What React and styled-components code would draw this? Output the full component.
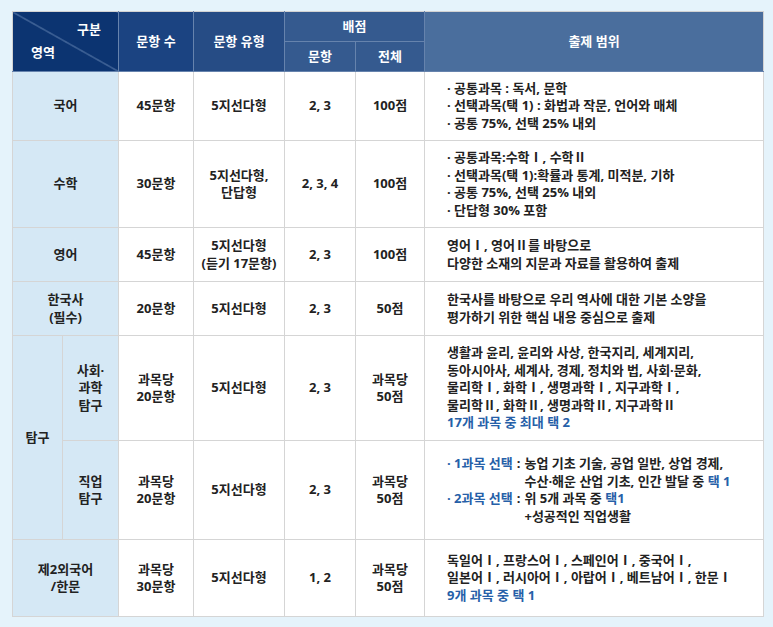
import React from "react";
import styled, { createGlobalStyle } from "styled-components";

const GlobalStyle = createGlobalStyle`
  html, body {
    margin: 0;
    padding: 0;
    background: #e5f3fb;
  }
  body {
    font-family: "Open Sans", "Noto Sans CJK KR", sans-serif;
    color: #222;
  }
`;

const Page = styled.div`
  padding: 11px 0 0 12px;
  width: 773px;
  height: 627px;
  box-sizing: border-box;
`;

const Table = styled.table`
  border-collapse: collapse;
  table-layout: fixed;
  width: 751px;
  font-size: 13px;
  font-weight: 700;
  letter-spacing: 0;
  line-height: 17.5px;
  border: 1px solid #d2d2d2;
`;

const HeadRow = styled.tr`
  height: 30px;
`;

const HeadCell = styled.th`
  background: ${({ $bg }) => $bg};
  color: #fff;
  font-weight: 700;
  font-size: 13px;
  border: 1px solid #6683ad;
  border-top: none;
  padding: 0;
  text-align: center;
  vertical-align: middle;
`;

const CornerCell = styled.th`
  position: relative;
  padding: 0;
  color: #fff;
  font-weight: 700;
  font-size: 13px;
  border: 1px solid #6683ad;
  border-top: none;
  border-left: none;
  background:
    linear-gradient(
      to top right,
      transparent calc(50% - 0.7px),
      #7b98c2 50%,
      transparent calc(50% + 0.7px)
    ),
    #0c3471;
`;

const CornerLabel = styled.span`
  position: absolute;
  ${({ $top }) => ($top ? "top: 9px; right: 17px;" : "bottom: 10px; left: 18px;")}
`;

const Row = styled.tr`
  height: ${({ $h }) => $h}px;
`;

const Cell = styled.td`
  background: #fff;
  border: 1px solid #d5d5d5;
  padding: 0 4px;
  text-align: center;
  vertical-align: middle;
`;

const AreaCell = styled(Cell)`
  background: #d5e8f5;
`;

const ScopeCell = styled(Cell)`
  text-align: left;
  padding: 0 8px 0 22px;
`;

const Line = styled.div`
  white-space: nowrap;
`;

const Blue = styled.span`
  color: #2660a8;
`;

const Choice = styled.div`
  display: flex;
  white-space: nowrap;
`;

const ChoiceLabel = styled.span`
  color: #2660a8;
  flex: none;
`;

const ChoiceColon = styled.span`
  flex: none;
  padding: 0 4px 0 4px;
`;

const ChoiceBody = styled.div`
  display: flex;
  flex-direction: column;
`;

const Lines = ({ items }) => items.map((t, i) => <Line key={i}>{t}</Line>);

const simpleRows = [
  {
    h: 69,
    area: ["국어"],
    count: ["45문항"],
    type: ["5지선다형"],
    item: "2, 3",
    total: ["100점"],
    scope: [
      "· 공통과목 : 독서, 문학",
      "· 선택과목(택 1) : 화법과 작문, 언어와 매체",
      "· 공통 75%, 선택 25% 내외",
    ],
  },
  {
    h: 87,
    area: ["수학"],
    count: ["30문항"],
    type: ["5지선다형,", "단답형"],
    item: "2, 3, 4",
    total: ["100점"],
    scope: [
      "· 공통과목:수학Ⅰ, 수학Ⅱ",
      "· 선택과목(택 1):확률과 통계, 미적분, 기하",
      "· 공통 75%, 선택 25% 내외",
      "· 단답형 30% 포함",
    ],
  },
  {
    h: 54,
    area: ["영어"],
    count: ["45문항"],
    type: ["5지선다형", "(듣기 17문항)"],
    item: "2, 3",
    total: ["100점"],
    scope: ["영어Ⅰ, 영어Ⅱ를 바탕으로", "다양한 소재의 지문과 자료를 활용하여 출제"],
  },
  {
    h: 54,
    area: ["한국사", "(필수)"],
    count: ["20문항"],
    type: ["5지선다형"],
    item: "2, 3",
    total: ["50점"],
    scope: [
      "한국사를 바탕으로 우리 역사에 대한 기본 소양을",
      "평가하기 위한 핵심 내용 중심으로 출제",
    ],
  },
];

const App = () => (
  <>
    <GlobalStyle />
    <Page>
      <Table>
        <colgroup>
          <col style={{ width: 50 }} />
          <col style={{ width: 56 }} />
          <col style={{ width: 75 }} />
          <col style={{ width: 91 }} />
          <col style={{ width: 71 }} />
          <col style={{ width: 69 }} />
          <col style={{ width: 339 }} />
        </colgroup>
        <thead>
          <HeadRow>
            <CornerCell colSpan={2} rowSpan={2}>
              <CornerLabel $top>구분</CornerLabel>
              <CornerLabel>영역</CornerLabel>
            </CornerCell>
            <HeadCell rowSpan={2} $bg="#1b4381">문항 수</HeadCell>
            <HeadCell rowSpan={2} $bg="#264c85">문항 유형</HeadCell>
            <HeadCell colSpan={2} $bg="#355a8f">배점</HeadCell>
            <HeadCell rowSpan={2} $bg="#4a6e9d" style={{ borderRight: "none" }}>
              출제 범위
            </HeadCell>
          </HeadRow>
          <HeadRow>
            <HeadCell $bg="#355a8f">문항</HeadCell>
            <HeadCell $bg="#355a8f">전체</HeadCell>
          </HeadRow>
        </thead>
        <tbody>
          {simpleRows.map((r, i) => (
            <Row key={i} $h={r.h}>
              <AreaCell colSpan={2}>
                <Lines items={r.area} />
              </AreaCell>
              <Cell>
                <Lines items={r.count} />
              </Cell>
              <Cell>
                <Lines items={r.type} />
              </Cell>
              <Cell>{r.item}</Cell>
              <Cell>
                <Lines items={r.total} />
              </Cell>
              <ScopeCell>
                <Lines items={r.scope} />
              </ScopeCell>
            </Row>
          ))}
          <Row $h={105}>
            <AreaCell rowSpan={2}>탐구</AreaCell>
            <AreaCell>
              <Lines items={["사회·", "과학", "탐구"]} />
            </AreaCell>
            <Cell>
              <Lines items={["과목당", "20문항"]} />
            </Cell>
            <Cell>5지선다형</Cell>
            <Cell>2, 3</Cell>
            <Cell>
              <Lines items={["과목당", "50점"]} />
            </Cell>
            <ScopeCell>
              <Lines
                items={[
                  "생활과 윤리, 윤리와 사상, 한국지리, 세계지리,",
                  "동아시아사, 세계사, 경제, 정치와 법, 사회·문화,",
                  "물리학Ⅰ, 화학Ⅰ, 생명과학Ⅰ, 지구과학Ⅰ,",
                  "물리학Ⅱ, 화학Ⅱ, 생명과학Ⅱ, 지구과학Ⅱ",
                ]}
              />
              <Line>
                <Blue>17개 과목 중 최대 택 2</Blue>
              </Line>
            </ScopeCell>
          </Row>
          <Row $h={99}>
            <AreaCell>
              <Lines items={["직업", "탐구"]} />
            </AreaCell>
            <Cell>
              <Lines items={["과목당", "20문항"]} />
            </Cell>
            <Cell>5지선다형</Cell>
            <Cell>2, 3</Cell>
            <Cell>
              <Lines items={["과목당", "50점"]} />
            </Cell>
            <ScopeCell>
              <Choice>
                <ChoiceLabel>· 1과목 선택</ChoiceLabel>
                <ChoiceColon>:</ChoiceColon>
                <ChoiceBody>
                  <span>농업 기초 기술, 공업 일반, 상업 경제,</span>
                  <span>
                    수산·해운 산업 기초, 인간 발달 중 <Blue>택 1</Blue>
                  </span>
                </ChoiceBody>
              </Choice>
              <Choice>
                <ChoiceLabel>· 2과목 선택</ChoiceLabel>
                <ChoiceColon>:</ChoiceColon>
                <ChoiceBody>
                  <span>
                    위 5개 과목 중 <Blue>택1</Blue>
                  </span>
                  <span>+성공적인 직업생활</span>
                </ChoiceBody>
              </Choice>
            </ScopeCell>
          </Row>
          <Row $h={77}>
            <AreaCell colSpan={2}>
              <Lines items={["제2외국어", "/한문"]} />
            </AreaCell>
            <Cell>
              <Lines items={["과목당", "30문항"]} />
            </Cell>
            <Cell>5지선다형</Cell>
            <Cell>1, 2</Cell>
            <Cell>
              <Lines items={["과목당", "50점"]} />
            </Cell>
            <ScopeCell>
              <Lines
                items={[
                  "독일어Ⅰ, 프랑스어Ⅰ, 스페인어Ⅰ, 중국어Ⅰ,",
                  "일본어Ⅰ, 러시아어Ⅰ, 아랍어Ⅰ, 베트남어Ⅰ, 한문Ⅰ",
                ]}
              />
              <Line>
                <Blue>9개 과목 중 택 1</Blue>
              </Line>
            </ScopeCell>
          </Row>
        </tbody>
      </Table>
    </Page>
  </>
);

export default App;
